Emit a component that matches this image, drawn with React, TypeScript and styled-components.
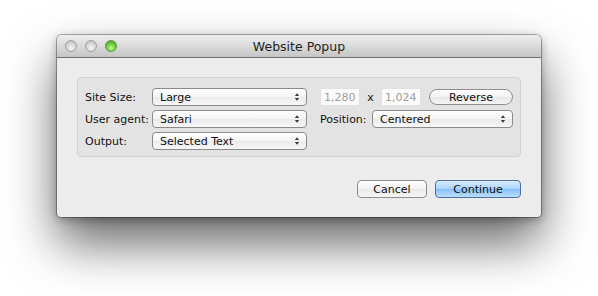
import React from "react";
import styled, { createGlobalStyle } from "styled-components";

const Global = createGlobalStyle`
  html, body { margin: 0; padding: 0; background: #ffffff; }
  body { font-family: "DejaVu Sans", "Liberation Sans", sans-serif; }
`;

const Desktop = styled.div`
  width: 598px;
  height: 296px;
  padding: 35px 0 0 57px;
  box-sizing: border-box;
  overflow: hidden;
`;

const Window = styled.div`
  width: 484px;
  height: 182px;
  border-radius: 5px 5px 4px 4px;
  background: #ececec;
  box-shadow: 0 0 0 1px rgba(0, 0, 0, 0.3), 0 26px 50px rgba(0, 0, 0, 0.6),
    0 3px 10px rgba(0, 0, 0, 0.3);
  display: flex;
  flex-direction: column;
  overflow: hidden;
`;

const TitleBar = styled.div`
  height: 23px;
  flex: none;
  background: linear-gradient(#eeeeee, #d8d8d8 55%, #c6c6c6);
  border-bottom: 1px solid #6f6f6f;
  box-sizing: border-box;
  position: relative;
  display: flex;
  align-items: center;
  padding-left: 8px;
  gap: 8px;
`;

const Light = styled.span<{ $green?: boolean }>`
  width: 12px;
  height: 12px;
  border-radius: 50%;
  box-sizing: border-box;
  border: 1px solid ${(p) => (p.$green ? "#5d9a3a" : "#a0a0a0")};
  background: ${(p) =>
    p.$green
      ? "radial-gradient(circle at 50% 70%, #c6fb96 0%, #72cf42 45%, #3f8f1e 100%)"
      : "radial-gradient(circle at 50% 70%, #f4f4f4 0%, #d8d8d8 50%, #b4b4b4 100%)"};
`;

const Title = styled.div`
  position: absolute;
  inset: 0;
  display: flex;
  align-items: center;
  justify-content: center;
  font-size: 12.5px;
  color: #1e1e1e;
  pointer-events: none;
`;

const Content = styled.div`
  flex: 1;
  padding: 19px 20px 0 20px;
  display: flex;
  flex-direction: column;
`;

const Group = styled.div`
  height: 80px;
  box-sizing: border-box;
  border: 1px solid #d2d2d2;
  border-radius: 4px;
  background: #e3e3e3;
  padding: 10px 0 0 7px;
  display: grid;
  grid-template-columns: 67px 155px 13px 40px 21px 40px 8px 84px;
  grid-template-rows: 18px 18px 18px;
  row-gap: 4px;
  align-items: center;
`;

const Label = styled.div<{ $col?: string }>`
  font-size: 11px;
  color: #111;
  grid-column: ${(p) => p.$col || "auto"};
  white-space: nowrap;
`;

const Popup = styled.div<{ $col?: string }>`
  grid-column: ${(p) => p.$col || "auto"};
  height: 18px;
  box-sizing: border-box;
  border: 1px solid #8a8a8a;
  border-radius: 4px;
  background: linear-gradient(#ffffff, #f4f4f4 50%, #ebebeb 51%, #f7f7f7);
  display: flex;
  align-items: center;
  justify-content: space-between;
  padding: 0 6px 0 7px;
  font-size: 11px;
  color: #111;
  flex: 1;
`;

const Arrows = styled.svg`
  width: 6px;
  height: 10px;
  flex: none;
`;

const Field = styled.div<{ $col: string }>`
  grid-column: ${(p) => p.$col};
  height: 18px;
  box-sizing: border-box;
  background: #fbfbfb;
  border: 1px solid #e0e0e0;
  font-size: 11px;
  color: #a0a0a0;
  display: flex;
  align-items: center;
  padding-left: 3px;
`;

const Times = styled.div`
  grid-column: 5;
  font-size: 11px;
  color: #111;
  text-align: center;
`;

const RoundButton = styled.div`
  grid-column: 8;
  height: 16px;
  box-sizing: border-box;
  border: 1px solid #8e8e8e;
  border-radius: 8px;
  background: linear-gradient(#ffffff, #f2f2f2 50%, #e7e7e7 51%, #f5f5f5);
  font-size: 11px;
  color: #111;
  display: flex;
  align-items: center;
  justify-content: center;
`;

const PositionRow = styled.div`
  grid-column: 4 / 9;
  display: flex;
  align-items: center;
`;

const PositionLabel = styled.div`
  width: 52px;
  flex: none;
  font-size: 11px;
  color: #111;
  white-space: nowrap;
`;

const Buttons = styled.div`
  margin-top: 23px;
  display: flex;
  justify-content: flex-end;
  gap: 8px;
`;

const PushButton = styled.div<{ $primary?: boolean; $w: number }>`
  width: ${(p) => p.$w}px;
  height: 18px;
  box-sizing: border-box;
  border-radius: 4px;
  border: 1px solid ${(p) => (p.$primary ? "#4e6fa6" : "#8d8d8d")};
  background: ${(p) =>
    p.$primary
      ? "linear-gradient(#d9edff, #a9d2fc 50%, #87bef8 51%, #bcdeff)"
      : "linear-gradient(#ffffff, #f3f3f3 50%, #e8e8e8 51%, #f6f6f6)"};
  font-size: 11px;
  color: #111;
  display: flex;
  align-items: center;
  justify-content: center;
`;

const Chevrons = () => (
  <Arrows viewBox="0 0 6 10">
    <path d="M0.8 4 L3 1.2 L5.2 4 Z" fill="#3a3a3a" />
    <path d="M0.8 6 L3 8.8 L5.2 6 Z" fill="#3a3a3a" />
  </Arrows>
);

export default function App() {
  return (
    <>
      <Global />
      <Desktop>
        <Window>
          <TitleBar>
            <Light />
            <Light />
            <Light $green />
            <Title>Website Popup</Title>
          </TitleBar>
          <Content>
            <Group>
              <Label $col="1">Site Size:</Label>
              <Popup $col="2">
                Large
                <Chevrons />
              </Popup>
              <Field $col="4">1,280</Field>
              <Times>x</Times>
              <Field $col="6">1,024</Field>
              <RoundButton>Reverse</RoundButton>

              <Label $col="1">User agent:</Label>
              <Popup $col="2">
                Safari
                <Chevrons />
              </Popup>
              <PositionRow>
                <PositionLabel>Position:</PositionLabel>
                <Popup>
                  Centered
                  <Chevrons />
                </Popup>
              </PositionRow>

              <Label $col="1">Output:</Label>
              <Popup $col="2">
                Selected Text
                <Chevrons />
              </Popup>
            </Group>
            <Buttons>
              <PushButton $w={70}>Cancel</PushButton>
              <PushButton $w={86} $primary>
                Continue
              </PushButton>
            </Buttons>
          </Content>
        </Window>
      </Desktop>
    </>
  );
}
